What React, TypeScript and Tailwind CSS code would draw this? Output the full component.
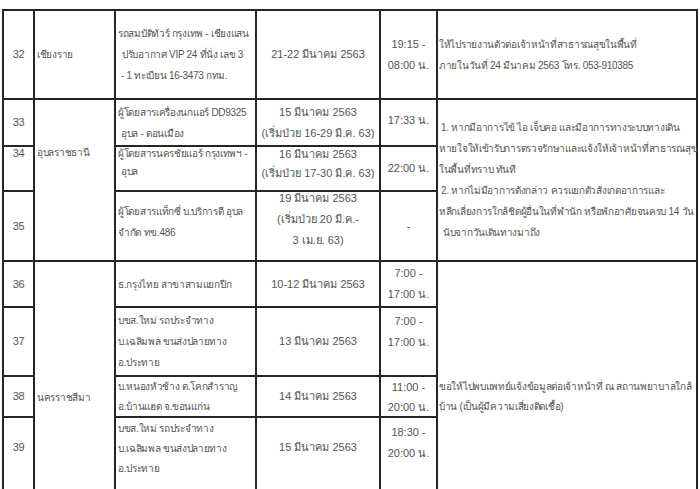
import React from "react";

function Cell({ className = "", children }: { className?: string; children?: React.ReactNode }) {
  return <div className={`bg-white ${className}`}>{children}</div>;
}

// common alignments
const num = "flex items-center justify-center";
const mid = "flex flex-col justify-center";
const ctr = "flex flex-col items-center justify-center text-center";
// date / time columns use a slightly larger face
const big = "text-[11px] tracking-[0px]";

export default function App() {
  return (
    <div className="h-[489px] w-[700px] overflow-hidden bg-white pt-[9px] font-[family-name:Tahoma,'Liberation_Sans','Noto_Sans',sans-serif] text-[10px] leading-[21px] tracking-[-0.3px] text-[#555555] whitespace-nowrap">
      <div className="ml-[2px] grid w-[696px] grid-cols-[29px_79px_139px_122px_55px_258px] grid-rows-[87px_45px_43px_68px_44px_67px_39px_80px] gap-[2px] bg-[#262626] p-[2px]">
        {/* 32 */}
        <Cell className={`${num} text-[11px]`}>32</Cell>
        <Cell className={`${mid} pl-[2px]`}>เชียงราย</Cell>
        <Cell className={`${mid} pl-[2px]`}>
          <div>รถสมบัติทัวร์ กรุงเทพ - เชียงแสน</div>
          <div className="pl-[4px]">ปรับอากาศ VIP 24 ที่นั่ง เลข 3</div>
          <div className="pl-[3px]">- 1 ทะเบียน 16-3473 กทม.</div>
        </Cell>
        <Cell className={`${ctr} ${big}`}>21-22 มีนาคม 2563</Cell>
        <Cell className={`${ctr} ${big}`}>
          <div>19:15 -</div>
          <div>08:00 น.</div>
        </Cell>
        <Cell className={`${mid} pl-[1px]`}>
          <div>ให้ไปรายงานตัวต่อเจ้าหน้าที่สาธารณสุขในพื้นที่</div>
          <div>ภายในวันที่ 24 มีนาคม 2563 โทร. 053-910385</div>
        </Cell>

        {/* 33 - 35 */}
        <Cell className={`${num} text-[11px]`}>33</Cell>
        <Cell className="row-span-3 pl-[2px] pt-[42px]">อุบลราชธานี</Cell>
        <Cell className={`${mid} pl-[2px]`}>
          <div>ผู้โดยสารเครื่องนกแอร์ DD9325</div>
          <div className="pl-[3px]">อุบล - ดอนเมือง</div>
        </Cell>
        <Cell className={`${ctr} ${big}`}>
          <div>15 มีนาคม 2563</div>
          <div>(เริ่มป่วย 16-29 มี.ค. 63)</div>
        </Cell>
        <Cell className={`${ctr} ${big} pb-[4px]`}>17:33 น.</Cell>
        <Cell className={`row-span-3 ${mid} pl-[1px]`}>
          <div className="pl-[2px]">1. หากมีอาการไข้ ไอ เจ็บคอ และมีอาการทางระบบทางเดิน</div>
          <div>หายใจให้เข้ารับการตรวจรักษาและแจ้งให้เจ้าหน้าที่สาธารณสุข</div>
          <div>ในพื้นที่ทราบ ทันที</div>
          <div className="pl-[2px]">2. หากไม่มีอาการดังกล่าว ควรแยกตัวสังเกตอาการและ</div>
          <div>หลีกเลี่ยงการใกล้ชิดผู้อื่นในที่พำนัก หรือพักอาศัยจนครบ 14 วัน</div>
          <div className="pl-[4px]">นับจากวันเดินทางมาถึง</div>
        </Cell>

        <Cell className="flex justify-center pt-[1px] text-[11px] leading-[10px]">34</Cell>
        <Cell className="pl-[2px] leading-[18px]">
          <div className="-mt-[2px]">ผู้โดยสารนครชัยแอร์ กรุงเทพฯ -</div>
          <div className="pl-[3px]">อุบล</div>
        </Cell>
        <Cell className={`text-center leading-[19px] ${big}`}>
          <div className="-mt-[2px]">16 มีนาคม 2563</div>
          <div>(เริ่มป่วย 17-30 มี.ค. 63)</div>
        </Cell>
        <Cell className={`${ctr} ${big}`}>22:00 น.</Cell>

        <Cell className={`${num} text-[11px]`}>35</Cell>
        <Cell className={`${mid} pl-[2px] pb-[8px]`}>
          <div>ผู้โดยสารแท็กซี่ บ.บริการดี อุบล</div>
          <div>จำกัด ทข.486</div>
        </Cell>
        <Cell className={`text-center ${big}`}>
          <div className="-mt-[4px]">19 มีนาคม 2563</div>
          <div>(เริ่มป่วย 20 มี.ค.-</div>
          <div>3 เม.ย. 63)</div>
        </Cell>
        <Cell className={`${ctr} ${big}`}>-</Cell>

        {/* 36 - 39 */}
        <Cell className={`${num} text-[11px]`}>36</Cell>
        <Cell className="row-span-4 pl-[2px] pt-[125px]">นครราชสีมา</Cell>
        <Cell className={`${mid} pl-[2px]`}>ธ.กรุงไทย สาขาสามแยกปีก</Cell>
        <Cell className={`${ctr} ${big}`}>10-12 มีนาคม 2563</Cell>
        <Cell className={`${ctr} ${big}`}>
          <div>7:00 -</div>
          <div>17:00 น.</div>
        </Cell>
        <Cell className="row-span-4 pl-[1px] pt-[115px] leading-[20px]">
          <div>ขอให้ไปพบแพทย์แจ้งข้อมูลต่อเจ้าหน้าที่ ณ สถานพยาบาลใกล้</div>
          <div>บ้าน (เป็นผู้มีความเสี่ยงติดเชื้อ)</div>
        </Cell>

        <Cell className={`${num} text-[11px]`}>37</Cell>
        <Cell className={`${mid} pl-[2px]`}>
          <div>บขส.ใหม่ รถประจำทาง</div>
          <div>บ.เฉลิมพล ขนส่งปลายทาง</div>
          <div>อ.ประทาย</div>
        </Cell>
        <Cell className={`${ctr} ${big}`}>13 มีนาคม 2563</Cell>
        <Cell className={`pt-[3px] text-center ${big}`}>
          <div>7:00 -</div>
          <div>17:00 น.</div>
        </Cell>

        <Cell className={`${num} text-[11px]`}>38</Cell>
        <Cell className={`${mid} pl-[2px] leading-[20px]`}>
          <div>บ.หนองหัวช้าง ต.โคกสำราญ</div>
          <div>อ.บ้านแฮด จ.ขอนแก่น</div>
        </Cell>
        <Cell className={`${ctr} ${big}`}>14 มีนาคม 2563</Cell>
        <Cell className={`${ctr} ${big} leading-[20px]`}>
          <div>11:00 -</div>
          <div>20:00 น.</div>
        </Cell>

        <Cell className="pt-[19px] text-center text-[11px]">39</Cell>
        <Cell className="pl-[2px] pt-[1px] leading-[20px]">
          <div>บขส.ใหม่ รถประจำทาง</div>
          <div>บ.เฉลิมพล ขนส่งปลายทาง</div>
          <div>อ.ประทาย</div>
        </Cell>
        <Cell className={`pt-[19px] text-center ${big}`}>15 มีนาคม 2563</Cell>
        <Cell className={`pt-[4px] text-center ${big}`}>
          <div>18:30 -</div>
          <div>20:00 น.</div>
        </Cell>
      </div>
    </div>
  );
}
